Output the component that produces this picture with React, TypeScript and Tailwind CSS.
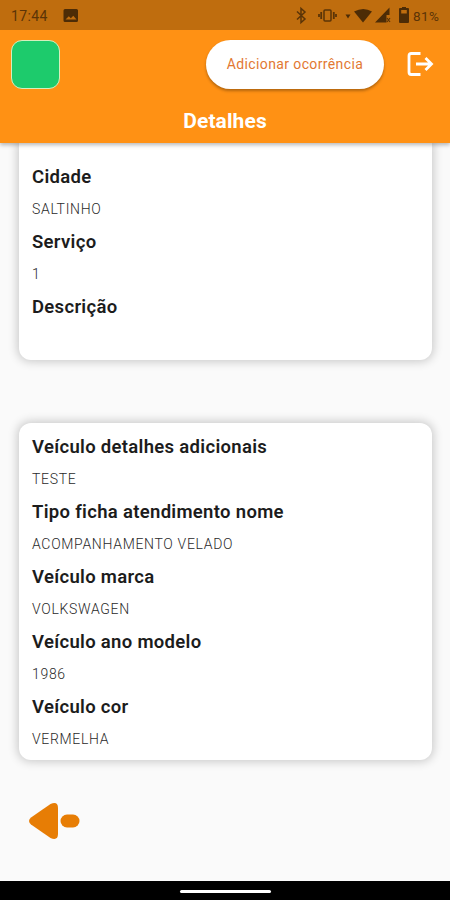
import React from 'react';

type Field = { label: string; value?: string };

const service: Field[] = [
  { label: 'Cidade', value: 'SALTINHO' },
  { label: 'Serviço', value: '1' },
  { label: 'Descrição' },
];

const vehicle: Field[] = [
  { label: 'Veículo detalhes adicionais', value: 'TESTE' },
  { label: 'Tipo ficha atendimento nome', value: 'ACOMPANHAMENTO VELADO' },
  { label: 'Veículo marca', value: 'VOLKSWAGEN' },
  { label: 'Veículo ano modelo', value: '1986' },
  { label: 'Veículo cor', value: 'VERMELHA' },
];

function Fields({ items }: { items: Field[] }) {
  return (
    <dl>
      {items.map((f) => (
        <div key={f.label} className="h-[65px]">
          <dt className="flex h-[32px] items-center whitespace-nowrap pt-[3px] text-[18.5px] font-semibold tracking-[0.31px] text-[#1c1c1c]">
            {f.label}
          </dt>
          <dd className="flex h-[33px] items-center whitespace-nowrap pt-[1.5px] text-[14px] font-light tracking-[0.68px] text-[#2a2a2a]">
            {f.value}
          </dd>
        </div>
      ))}
    </dl>
  );
}

function StatusBar() {
  return (
    <div className="flex h-[30px] items-center bg-[#bf6d0e] pl-[11px] pr-[9px] text-[13.5px] text-[#5b3407]">
      <span className="w-[38px] pt-[2px] text-[14px] tracking-[0.4px]">17:44</span>
      <svg className="ml-[14px]" width="16" height="15" viewBox="0 0 16 15" fill="#4d2c06">
        <path fillRule="evenodd" d="M2 1h11.5a1.5 1.5 0 0 1 1.5 1.5v10a1.5 1.5 0 0 1-1.5 1.5H2A1.5 1.5 0 0 1 .5 12.5v-10A1.5 1.5 0 0 1 2 1Zm.5 10.5h11l-3.2-3.7-2.5 2.5-2-2Z" />
      </svg>
      <svg className="ml-auto" width="122" height="20" viewBox="0 0 122 20" fill="#4d2c06">
        <path d="m6 6.500 8 7.500-4 3.500v-14L14 7l-8 7.500" fill="none" stroke="#5b3407" strokeWidth="1.5" />
        <rect x="33" y="5" width="7" height="11" rx="1" fill="none" stroke="#5b3407" strokeWidth="1.5" />
        <path d="M30.200 7v7M42.800 7v7M28 9v3M45 9v3" stroke="#5b3407" strokeWidth="1.800" />
        <path d="M54.500 9.500h5l-2.500 4Z" />
        <path d="M63 6.500q9.500-5 18 0L72 17.500Z" />
        <path d="M98.500 2.500V10h-3v7.500H84Z" />
        <path d="m96 13 3 4m0-4-3 4" stroke="#5b3407" strokeWidth="1.200" />
        <path fillRule="evenodd" d="M109 3h2V2h4v1h2q1 0 1 1v13q0 1-1 1h-8q-1 0-1-1V4q0-1 1-1Zm1.200 2v3.500h5.600V5Z" />
      </svg>
      <span className="w-[28px] pt-[2px] text-[13.5px] tracking-[0.4px]">81%</span>
    </div>
  );
}

export default function App() {
  return (
    <div className="flex h-[900px] w-[450px] flex-col overflow-hidden bg-[#fafafa] font-['Roboto','Liberation_Sans',sans-serif]">
      <header className="relative z-10 h-[143px] shrink-0 bg-[#ff9114] shadow-[0_2px_4px_rgba(0,0,0,0.28)]">
        <StatusBar />
        <div className="flex h-[68px] items-center pl-[11px] pr-[16px]">
          <div className="h-[49px] w-[49px] rounded-[11px] border-[1.5px] border-[#d5efbd] bg-[#1dcb6c]" />
          <button className="ml-auto h-[49px] w-[178px] whitespace-nowrap rounded-full bg-white text-[14px] tracking-[0.38px] text-[#e27832] shadow-[0_2px_3px_rgba(0,0,0,0.3)]">
            Adicionar ocorrência
          </button>
          <svg className="ml-[23px]" width="27" height="26" viewBox="0 0 27 26" fill="none" stroke="white" strokeWidth="2.800">
            <path d="M13.500 2.500H4.200Q2 2.500 2 4.700v16.600q0 2.200 2.200 2.200h9.300M9 13h15M18.500 7l6 6-6 6" />
          </svg>
        </div>
        <h1 className="pt-[9px] text-center text-[21px] font-bold leading-[28px] tracking-[0.1px] text-white">Detalhes</h1>
      </header>
      <main className="flex flex-1 flex-col">
        <section className="ml-[19px] h-[217px] w-[413px] shrink-0 rounded-b-[12px] bg-white pl-[13px] pt-[17px] shadow-[0_0_10px_2px_rgba(0,0,0,0.19)]">
          <Fields items={service} />
        </section>
        <section className="ml-[19px] mt-[63px] h-[337px] w-[413px] shrink-0 rounded-[12px] bg-white pl-[13px] pt-[7px] shadow-[0_0_10px_2px_rgba(0,0,0,0.19)]">
          <Fields items={vehicle} />
        </section>
        <button aria-label="Voltar" className="ml-[28px] mt-[41px] w-[52px]">
          <svg width="52" height="40" viewBox="0 0 52 40" fill="#e77d05">
            <path d="M3 16.500 22.500 3Q30 0 30 7v26q0 7-7.500 4L3 23.500q-4-3.500 0-7Z" />
            <rect x="32.500" y="13.500" width="19" height="13" rx="6.500" />
          </svg>
        </button>
      </main>
      <footer className="flex h-[19px] shrink-0 items-center justify-center bg-black pt-[2px]">
        <div className="h-[3px] w-[91px] rounded-full bg-white" />
      </footer>
    </div>
  );
}
